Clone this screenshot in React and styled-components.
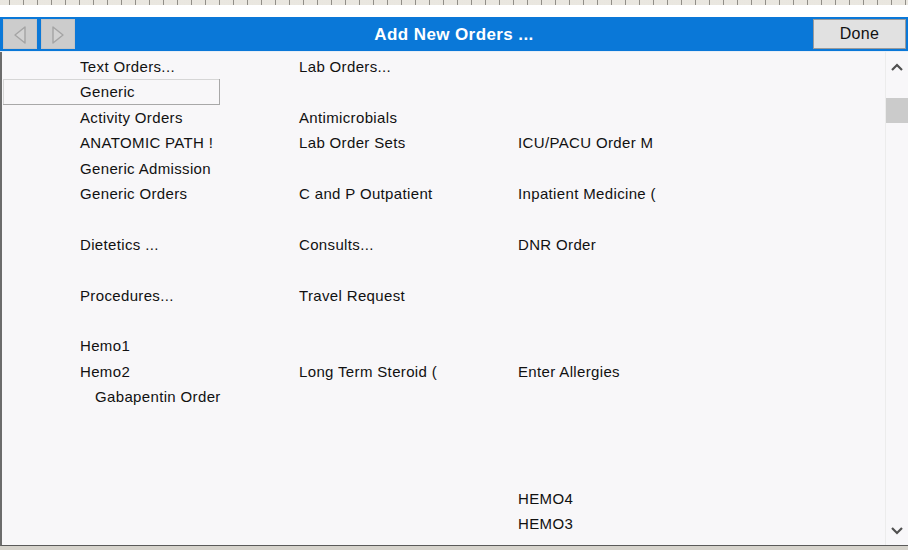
import React from 'react'
import styled, { createGlobalStyle } from 'styled-components';

const GlobalStyle = createGlobalStyle`
    html, body {
        margin: 0;
        padding: 0;
        width: 908px;
        height: 550px;
        overflow: hidden;
        background: #d6d3cc;
    }
    body {
        font-family: "Liberation Sans", Arial, sans-serif;
    }
`;

// labels are written as far as the window shows them
const rows = [
    ['Text Orders...', 'Lab Orders...', ''],
    ['Generic', '', ''],
    ['Activity Orders', 'Antimicrobials', ''],
    ['ANATOMIC PATH !', 'Lab Order Sets', 'ICU/PACU Order M'],
    ['Generic Admission', '', ''],
    ['Generic Orders', 'C and P Outpatient', 'Inpatient Medicine ('],
    ['', '', ''],
    ['Dietetics ...', 'Consults...', 'DNR Order'],
    ['', '', ''],
    ['Procedures...', 'Travel Request', ''],
    ['', '', ''],
    ['Hemo1', '', ''],
    ['Hemo2', 'Long Term Steroid (', 'Enter Allergies'],
    ['  Gabapentin Order', '', ''],
    ['', '', ''],
    ['', '', ''],
    ['', '', ''],
    ['', '', 'HEMO4'],
    ['', '', 'HEMO3'],
];

function NavArrow({ dir }) {
    const pts = dir === 'left' ? '22,8 12,16 22,24' : '12,8 22,16 12,24';
    return (
        <NavButton>
            <svg width="34" height="30" viewBox="0 0 34 30">
                <polygon points={pts} fill="#d2d2d2" stroke="#a4a4a4" strokeWidth="1.4" strokeLinejoin="round" />
            </svg>
        </NavButton>
    );
}

function Chevron({ up }) {
    return (
        <svg width="12" height="8" viewBox="0 0 12 8">
            <polyline
                points={up ? '1,7 6,2 11,7' : '1,1 6,6 11,1'}
                fill="none"
                stroke="#505050"
                strokeWidth="2.2"
            />
        </svg>
    );
}

function App() {
    return (
        <Window>
            <GlobalStyle />
            <TopStrip />
            <WhiteGap />
            <TitleBar>
                <NavArrow dir="left" />
                <NavArrow dir="right" />
                <Title>Add New Orders ...</Title>
                <DoneButton>Done</DoneButton>
            </TitleBar>
            <Body>
                <OrderGrid>
                    {rows.map((row, r) =>
                        row.map((label, c) => (
                            <Cell
                                key={r + '-' + c}
                                $focused={r === 1 && c === 0}
                                $indent={label.startsWith('  ')}
                            >
                                {label.trim()}
                            </Cell>
                        ))
                    )}
                </OrderGrid>
                <ScrollBar>
                    <ScrollArrow><Chevron up /></ScrollArrow>
                    <Thumb />
                    <Track />
                    <ScrollArrow><Chevron /></ScrollArrow>
                </ScrollBar>
            </Body>
            <BottomStrip />
        </Window>
    )
}

const Window = styled.div`
    width: 908px;
    height: 550px;
    display: flex;
    flex-direction: column;
    overflow: hidden;
`;

const TopStrip = styled.div`
    height: 5px;
    background: repeating-linear-gradient(90deg, #ece9e2 0 9px, #8a8780 9px 10px, #ece9e2 10px 14px);
    opacity: 0.9;
`;

const WhiteGap = styled.div`
    height: 12px;
    background: #ffffff;
`;

const TitleBar = styled.div`
    height: 34px;
    background: #0a78d8;
    display: flex;
    align-items: center;
    padding: 0 2px 0 3px;
    gap: 4px;
    border-bottom: 1px solid #e8eef6;
`;

const NavButton = styled.div`
    width: 34px;
    height: 30px;
    background: #cccccc;
    box-shadow: inset 0 0 0 1px #c4c4c4;
    display: flex;
    svg {
        display: block;
    }
`;

const Title = styled.div`
    flex: 1;
    text-align: center;
    color: #ffffff;
    font-weight: bold;
    font-size: 17px;
    letter-spacing: 0.4px;
    padding-left: 20px;
    padding-top: 1px;
`;

const DoneButton = styled.div`
    width: 91px;
    height: 28px;
    background: #e1e1e1;
    border: 1px solid #9a9a9a;
    display: flex;
    align-items: center;
    justify-content: center;
    font-size: 16px;
    letter-spacing: 0.3px;
    color: #111;
`;

const Body = styled.div`
    flex: 1;
    display: flex;
    background: #f8f7f9;
    border-left: 2px solid #6c6c6c;
    border-bottom: 1px solid #5a5a5a;
    min-height: 0;
`;

const OrderGrid = styled.div`
    flex: 1;
    display: grid;
    grid-template-columns: repeat(3, 217px);
    grid-auto-rows: 25.4px;
    column-gap: 2px;
    padding: 2px 0 0 1px;
    align-content: start;
`;

const Cell = styled.div`
    padding-left: ${p => (p.$indent ? '92px' : '77px')};
    white-space: nowrap;
    font-size: 15px;
    letter-spacing: 0.35px;
    line-height: 25px;
    color: #111;
    box-shadow: ${p => (p.$focused ? 'inset -1px -1px 0 #a8a8a8, inset 1px 1px 0 #d6d6d6' : 'none')};
`;

const ScrollBar = styled.div`
    width: 22px;
    border-left: 1px solid #ececec;
    display: flex;
    flex-direction: column;
    align-items: center;
    padding-top: 9px;
    padding-bottom: 8px;
`;

const ScrollArrow = styled.div`
    height: 12px;
    display: flex;
    align-items: center;
    justify-content: center;
`;

const Thumb = styled.div`
    width: 22px;
    height: 25px;
    margin-top: 25px;
    background: #cbcbcb;
`;

const Track = styled.div`
    flex: 1;
`;

const BottomStrip = styled.div`
    height: 4px;
    background: #d6d3cc;
`;

export default App;
